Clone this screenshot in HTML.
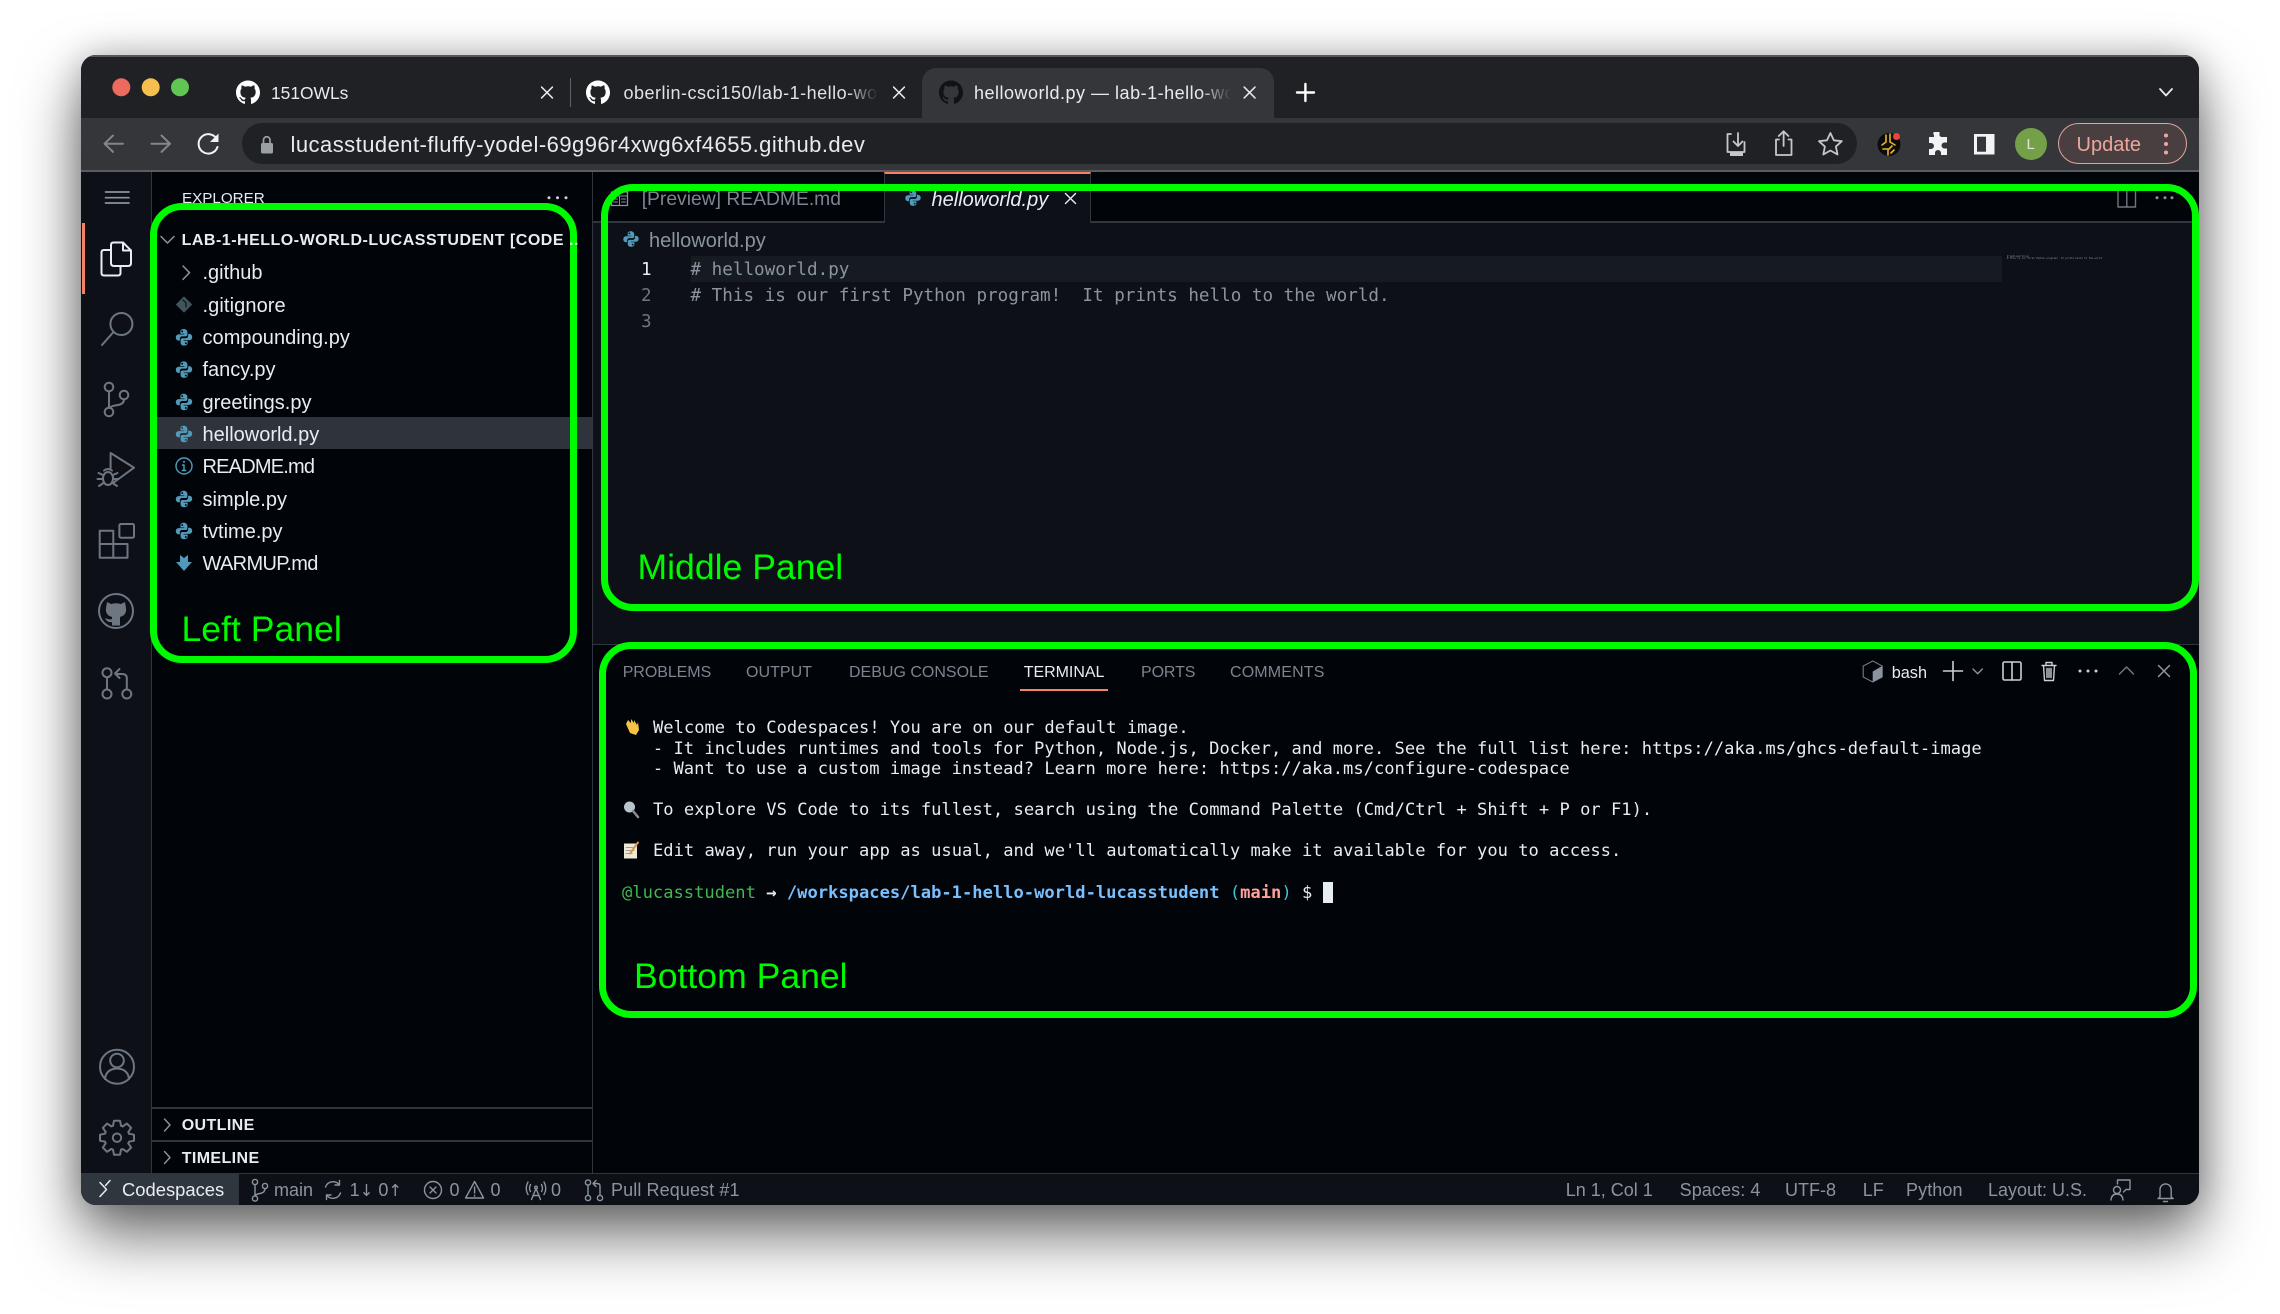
<!DOCTYPE html>
<html><head><meta charset="utf-8"><title>Codespaces</title>
<style>
html,body{margin:0;padding:0;background:#fff;width:2280px;height:1314px;overflow:hidden}
*{box-sizing:border-box}
#win{position:absolute;left:81px;top:55px;width:2118px;height:1150px;border-radius:15px;box-shadow:0 30px 62px rgba(0,0,0,.58),0 0 34px rgba(0,0,0,.22)}
#clip{position:absolute;left:81px;top:55px;width:2118px;height:1150px;border-radius:15px;overflow:hidden;background:#010409}
.r{position:absolute}
.abs{position:absolute;left:0;top:0;width:2280px;height:1314px}
.t{position:absolute;white-space:pre;line-height:30px;height:30px;font-family:"Liberation Sans",sans-serif}
.m{position:absolute;white-space:pre;font-family:"DejaVu Sans Mono","Liberation Mono",monospace;line-height:20px;height:20px}
.f{font-size:20px;color:#e6edf3;left:202.5px}
.tab{font-size:16px;color:#7d8590}
.st{font-size:18px;color:#8b949e}
.g{position:absolute;border:7.5px solid #00fa00;border-radius:32px}
.gl{position:absolute;font:35.6px/40px "Liberation Sans",sans-serif;color:#00fa00;white-space:pre}
.ed{font-size:17.6px;color:#8b949e}
.tm{font-size:17.11px;color:#e6edf3}
</style></head><body>
<div id="win"></div>
<div id="clip"></div>
<div class="abs" style="clip-path:inset(55px 81px 109px 81px round 15px)">
<!-- title / toolbar -->
<div class="r" style="left:81px;top:55px;width:2118px;height:63px;background:#202124"></div>
<div class="r" style="left:81px;top:55px;width:2118px;height:2px;background:#55575b"></div>
<div class="r" style="left:921.5px;top:68px;width:352px;height:50px;background:#35363a;border-radius:14px 14px 0 0"></div>
<div class="r" style="left:81px;top:118px;width:2118px;height:52px;background:#35363a"></div>
<div class="r" style="left:81px;top:170px;width:2118px;height:2px;background:#5a5b5f"></div>
<div class="r" style="left:242px;top:123px;width:1615px;height:41px;border-radius:21px;background:#202124"></div>
<div class="r" style="left:570px;top:78px;width:1px;height:29px;background:#5f6368"></div>
<div class="r" style="left:2058px;top:123px;width:129px;height:41px;border-radius:21px;background:#4a3f40;border:1.5px solid #e0a49c"></div>
<!-- activity bar, panels -->
<div class="r" style="left:81px;top:172px;width:71px;height:1001px;background:#0d1117"></div>
<div class="r" style="left:151px;top:172px;width:1px;height:1001px;background:#30363d"></div>
<div class="r" style="left:82px;top:223px;width:2.5px;height:71px;background:#f78166"></div>
<div class="r" style="left:152px;top:172px;width:440px;height:1001px;background:#010409"></div>
<div class="r" style="left:592px;top:172px;width:1px;height:1001px;background:#30363d"></div>
<div class="r" style="left:152px;top:417px;width:440px;height:32px;background:#2f333b"></div>
<div class="r" style="left:152px;top:1107px;width:440px;height:1.5px;background:#30363d"></div>
<div class="r" style="left:152px;top:1140px;width:440px;height:1.5px;background:#30363d"></div>
<!-- editor -->
<div class="r" style="left:593px;top:172px;width:1606px;height:50px;background:#010409"></div>
<div class="r" style="left:593px;top:222px;width:1606px;height:422px;background:#0d1117"></div>
<div class="r" style="left:593px;top:221px;width:1606px;height:1.5px;background:#30363d"></div>
<div class="r" style="left:884px;top:172px;width:207px;height:51px;background:#0d1117;border-left:1px solid #30363d;border-right:1px solid #30363d;border-top:2px solid #f78166"></div>
<div class="r" style="left:690.5px;top:256px;width:1311px;height:26px;background:#161b22"></div>
<div class="r" style="left:593px;top:644px;width:1606px;height:1.5px;background:#30363d"></div>
<div class="r" style="left:593px;top:645px;width:1606px;height:528px;background:#010409"></div>
<div class="r" style="left:1020px;top:689px;width:88px;height:2px;background:#f78166"></div>
<!-- status -->
<div class="r" style="left:81px;top:1173px;width:2118px;height:32px;background:#0d1117;border-top:1.5px solid #30363d"></div>
<div class="r" style="left:81px;top:1174px;width:158px;height:31px;background:#30363d"></div>
<div class="r" style="left:1323px;top:882px;width:10px;height:21px;background:#e6edf3"></div>

<!-- chrome text -->
<div class="t" style="left:271px;top:78px;font-size:17.4px;color:#e8eaed">151OWLs</div>
<div class="t" style="left:623.5px;top:78px;width:254px;overflow:hidden;font-size:18px;letter-spacing:.5px;color:#dfe1e5;-webkit-mask-image:linear-gradient(90deg,#000 88%,transparent)">oberlin-csci150/lab-1-hello-world-lucasstudent</div>
<div class="t" style="left:974px;top:78px;width:257px;overflow:hidden;font-size:18px;letter-spacing:.5px;color:#e8eaed;-webkit-mask-image:linear-gradient(90deg,#000 88%,transparent)">helloworld.py — lab-1-hello-world-lucasstudent</div>
<div class="t" style="left:290.5px;top:129.7px;font-size:22px;letter-spacing:.46px;color:#e8eaed">lucasstudent-fluffy-yodel-69g96r4xwg6xf4655.github.dev</div>
<div class="t" style="left:2076.5px;top:129.7px;font-size:20px;color:#eda69e">Update</div>

<!-- sidebar text -->
<div class="t" style="left:182px;top:183.5px;font-size:15.2px;color:#e6edf3">EXPLORER</div>
<div class="t" style="left:181.6px;top:226px;font-size:16px;font-weight:bold;letter-spacing:.5px;color:#e6edf3">LAB-1-HELLO-WORLD-LUCASSTUDENT [CODE</div>
<div class="t f" style="top:258.4px">.github</div>
<div class="t f" style="top:290.7px;letter-spacing:.1px">.gitignore</div>
<div class="t f" style="top:323px;letter-spacing:.05px">compounding.py</div>
<div class="t f" style="top:355.3px">fancy.py</div>
<div class="t f" style="top:387.7px">greetings.py</div>
<div class="t f" style="top:419.7px">helloworld.py</div>
<div class="t f" style="top:452.2px;letter-spacing:-.8px">README.md</div>
<div class="t f" style="top:484.7px">simple.py</div>
<div class="t f" style="top:516.7px">tvtime.py</div>
<div class="t f" style="top:549.3px;letter-spacing:-.65px">WARMUP.md</div>
<div class="t" style="left:181.7px;top:1111px;font-size:16px;font-weight:bold;letter-spacing:.4px;color:#e6edf3">OUTLINE</div>
<div class="t" style="left:181.7px;top:1143.5px;font-size:16px;font-weight:bold;letter-spacing:.4px;color:#e6edf3">TIMELINE</div>

<!-- editor text -->
<div class="t" style="left:641.7px;top:184.5px;font-size:19.3px;color:#7d8590">[Preview] README.md</div>
<div class="t" style="left:931.5px;top:184.5px;font-size:20px;font-style:italic;color:#e6edf3">helloworld.py</div>
<div class="t" style="left:649px;top:225.5px;font-size:20px;color:#8b949e">helloworld.py</div>
<div class="m ed" style="left:641px;top:260.3px;color:#e6edf3">1</div>
<div class="m ed" style="left:641px;top:286.3px;color:#6e7681">2</div>
<div class="m ed" style="left:641px;top:312.3px;color:#6e7681">3</div>
<div class="m ed" style="left:690.5px;top:260.3px"># helloworld.py</div>
<div class="m ed" style="left:690.5px;top:286.3px"># This is our first Python program!  It prints hello to the world.</div>
<div class="r" style="left:2007px;top:255.5px;font:2.43px/2.7px 'DejaVu Sans Mono',monospace;color:#8b949e;white-space:pre"># helloworld.py
# This is our first Python program!  It prints hello to the world.</div>

<!-- panel text -->
<div class="t tab" style="left:622.7px;top:657.5px;letter-spacing:-.05px">PROBLEMS</div>
<div class="t tab" style="left:746px;top:657.5px;letter-spacing:.05px">OUTPUT</div>
<div class="t tab" style="left:849px;top:657.5px">DEBUG CONSOLE</div>
<div class="t tab" style="left:1023.8px;top:657.5px;color:#e6edf3;letter-spacing:-.05px">TERMINAL</div>
<div class="t tab" style="left:1141px;top:657.5px;letter-spacing:-.1px">PORTS</div>
<div class="t tab" style="left:1230px;top:657.5px;letter-spacing:.15px">COMMENTS</div>
<div class="t" style="left:1891.7px;top:657.5px;font-size:16.3px;color:#e6edf3">bash</div>

<div class="m tm" style="left:653px;top:718px">Welcome to Codespaces! You are on our default image.</div>
<div class="m tm" style="left:622px;top:738.5px">   - It includes runtimes and tools for Python, Node.js, Docker, and more. See the full list here: https://aka.ms/ghcs-default-image</div>
<div class="m tm" style="left:622px;top:759.2px">   - Want to use a custom image instead? Learn more here: https://aka.ms/configure-codespace</div>
<div class="m tm" style="left:653px;top:800.2px">To explore VS Code to its fullest, search using the Command Palette (Cmd/Ctrl + Shift + P or F1).</div>
<div class="m tm" style="left:653px;top:841.2px">Edit away, run your app as usual, and we'll automatically make it available for you to access.</div>
<div class="m tm" style="left:622px;top:882.5px"><span style="color:#3fb950">@lucasstudent</span> <b>→</b> <b style="color:#79c0ff">/workspaces/lab-1-hello-world-lucasstudent</b> <span style="color:#39c5cf">(</span><b style="color:#ffa198">main</b><span style="color:#39c5cf">)</span> $</div>

<!-- status text -->
<div class="t" style="left:122px;top:1175px;font-size:18.4px;color:#e6edf3">Codespaces</div>
<div class="t st" style="left:274px;top:1175px">main</div>
<div class="t st" style="left:349.6px;top:1175px">1<span style="font:16.4px 'DejaVu Sans',sans-serif">↓</span> 0<span style="font:16.4px 'DejaVu Sans',sans-serif">↑</span></div>
<div class="t st" style="left:449.5px;top:1175px">0</div>
<div class="t st" style="left:490.5px;top:1175px">0</div>
<div class="t st" style="left:551px;top:1175px">0</div>
<div class="t st" style="left:611px;top:1175px;letter-spacing:.1px">Pull Request #1</div>
<div class="t st" style="left:1565.7px;top:1175px">Ln 1, Col 1</div>
<div class="t st" style="left:1679.6px;top:1175px;letter-spacing:.1px">Spaces: 4</div>
<div class="t st" style="left:1785px;top:1175px">UTF-8</div>
<div class="t st" style="left:1862.7px;top:1175px">LF</div>
<div class="t st" style="left:1906px;top:1175px;letter-spacing:.1px">Python</div>
<div class="t st" style="left:1988px;top:1175px">Layout: U.S.</div>

<!-- icons -->
<svg class="abs" width="2280" height="1314" viewBox="0 0 2280 1314" fill="none" stroke-linecap="round" stroke-linejoin="round">
<defs>
<symbol id="gh" viewBox="0 0 16 16" overflow="visible"><path fill="currentColor" stroke="none" d="M8 0C3.58 0 0 3.58 0 8c0 3.54 2.29 6.53 5.47 7.59.4.07.55-.17.55-.38 0-.19-.01-.82-.01-1.49-2.01.37-2.53-.49-2.69-.94-.09-.23-.48-.94-.82-1.13-.28-.15-.68-.52-.01-.53.63-.01 1.08.58 1.23.82.72 1.21 1.87.87 2.33.66.07-.52.28-.87.51-1.07-1.78-.2-3.64-.89-3.64-3.95 0-.87.31-1.59.82-2.15-.08-.2-.36-1.02.08-2.12 0 0 .67-.21 2.2.82.64-.18 1.32-.27 2-.27.68 0 1.36.09 2 .27 1.53-1.04 2.2-.82 2.2-.82.44 1.1.16 1.92.08 2.12.51.56.82 1.27.82 2.15 0 3.07-1.87 3.75-3.65 3.95.29.25.54.73.54 1.48 0 1.07-.01 1.93-.01 2.2 0 .21.15.46.55.38A8.013 8.013 0 0016 8c0-4.42-3.58-8-8-8z"/></symbol>
<symbol id="py" viewBox="0 0 16 16" overflow="visible"><g fill="#519aba" stroke="none"><path fill-rule="evenodd" d="M8 .2C5.300.2 4.600 1.400 4.600 2.900v1.800h3.700v.6H3C1.500 5.300.3 6.500.3 8.100c0 1.800 1.100 3 2.500 3h1.300V9.300c0-1.200.9-2.200 2.100-2.200h3.300c1 0 1.700-.7 1.700-1.700V2.900C10.900 1.400 9.800.2 8 .2zM6.300 1.500a.9.9 0 110 1.800.9.9 0 010-1.800z"/><path fill-rule="evenodd" d="M8 15.800c2.700 0 3.400-1.200 3.400-2.700v-1.800H7.700v-.6H13c1.500 0 2.700-1.200 2.700-2.800 0-1.800-1.100-3-2.500-3h-1.300v1.800c0 1.200-.9 2.200-2.100 2.200H6.500c-1 0-1.700.7-1.700 1.700v2.500c0 1.500 1.100 2.700 3.200 2.700zm1.700-1.300a.9.9 0 110-1.800.9.9 0 010 1.800z"/></g></symbol>
<symbol id="x" viewBox="-8 -8 16 16" overflow="visible"><path d="M-6.200 -6.200L6.200 6.200M6.200 -6.200L-6.200 6.200" stroke="currentColor" stroke-width="1.700"/></symbol>
</defs>

<!-- traffic lights -->
<circle cx="121.300" cy="87.300" r="9" fill="#ed6a5e"/><circle cx="150.700" cy="87.300" r="9" fill="#f4bf4f"/><circle cx="180" cy="87.300" r="9" fill="#61c554"/>
<!-- tab icons -->
<use href="#gh" x="236" y="80.500" width="24" height="24" color="#fff"/>
<use href="#gh" x="586" y="80.500" width="24" height="24" color="#fff"/>
<use href="#gh" x="939" y="80.500" width="24" height="24" color="#111214"/>
<use href="#x" x="540" y="85.500" width="14" height="14" color="#e8eaed"/>
<use href="#x" x="892" y="85.500" width="14" height="14" color="#e8eaed"/>
<use href="#x" x="1242.600" y="85.500" width="14" height="14" color="#e8eaed"/>
<path d="M1305.400 84v17M1297 92.500h17" stroke="#fff" stroke-width="2.400"/>
<path d="M2160 89l6 6.500 6-6.500" stroke="#e8eaed" stroke-width="1.800"/>
<!-- toolbar -->
<path d="M123 143.700H105.500M113 135.500l-8.500 8.200 8.500 8.200" stroke="#84868a" stroke-width="2"/>
<path d="M151.500 143.700H169M161.500 135.500l8.500 8.200-8.500 8.200" stroke="#84868a" stroke-width="2"/>
<path d="M216.700 139a9.700 9.700 0 10.800 8" stroke="#f1f3f4" stroke-width="2"/><path d="M218.500 133.500v8.500h-8.500z" fill="#f1f3f4" stroke="none"/>
<rect x="261" y="143" width="12" height="10.500" rx="1.500" fill="#9aa0a6"/><path d="M263.500 143v-3a3.200 3.200 0 016.500 0v3" stroke="#9aa0a6" stroke-width="1.700"/>
<!-- install -->
<path d="M1731 134h-3.500v18h17v-10M1738 133v13M1733.500 141.500l4.500 4.500 4.500-4.500" stroke="#c4c7cb" stroke-width="1.800"/><rect x="1730" y="152" width="13" height="4" fill="#c4c7cb"/>
<!-- share -->
<path d="M1783.600 146v-14M1778.800 136l4.800-4.800 4.800 4.800M1779 139.500h-3v15.500h15.500v-15.500h-3" stroke="#c4c7cb" stroke-width="1.800"/>
<!-- star -->
<path d="M1830.400 133l3.400 7.300 8 .9-5.900 5.400 1.600 7.900-7.100-4-7.100 4 1.600-7.900-5.900-5.400 8-.9z" stroke="#c4c7cb" stroke-width="1.800"/>
<!-- ext round -->
<circle cx="1889" cy="144.500" r="11.500" fill="#0c0c0c"/>
<path d="M1886 135v7l-4 3M1890 134v8l5 3M1883 149h6l3-3M1888 155v-5M1894 150l-3 3" stroke="#e5b62f" stroke-width="1.600"/>
<circle cx="1896.500" cy="136.500" r="3.500" fill="#e8453c"/>
<!-- puzzle -->
<path d="M1934 132h5.500v3.500a2.500 2.500 0 002 1.500h5.500v5.500h-2.500a3 3 0 000 6h2.500v6.500h-6v-2a3 3 0 00-6 0v2h-6v-6h2a3 3 0 000-6h-2v-6h5v-2a2 2 0 010-3z" fill="#f1f3f4" stroke="none"/>
<!-- side panel -->
<rect x="1974" y="134" width="20.500" height="20.500" fill="#f1f3f4"/><rect x="1977" y="136.700" width="9" height="15" fill="#35363a"/>
<!-- avatar -->
<circle cx="2031" cy="144" r="16" fill="#74a04a"/>
<!-- update dots -->
<circle cx="2166" cy="135.500" r="2" fill="#eda69e"/><circle cx="2166" cy="144" r="2" fill="#eda69e"/><circle cx="2166" cy="152.500" r="2" fill="#eda69e"/>

<!-- activity bar -->
<path d="M105.500 192h23.500M105.500 197.700h23.500M105.500 203h23.500" stroke="#8b949e" stroke-width="1.700"/>
<g stroke="#e6edf3" stroke-width="2">
<path d="M111 245Q111 242.500 113.500 242.500H123L131 250.500V263Q131 266 128 266H114Q111 266 111 263Z"/><path d="M123 242.500V250.500H131"/>
<path d="M111 250H104Q101.500 250 101.500 252.500V273Q101.500 275.500 104 275.500H118Q120.500 275.500 120.500 273V266"/>
</g>
<g stroke="#6e7681" stroke-width="2">
<circle cx="121.400" cy="324" r="11"/><path d="M113.500 332L102 345"/>
<circle cx="109" cy="387" r="4.300"/><circle cx="109" cy="412" r="4.300"/><circle cx="124" cy="395" r="4.300"/><path d="M109 391.300V407.700M124 399.300Q124 404 118 405Q110.500 406 109.800 408"/>
<path d="M110.600 468V453L134 467.700L113 483"/>
<ellipse cx="108" cy="478.500" rx="5" ry="6.500"/><path d="M104 470.500q4-3 8 0M103 475l-4.500-2M113 475l4.500-2M103 479h-5.500M113 479h5.500M103.500 483l-4.500 3M112.500 483l4.500 3"/>
<path d="M99.700 544V530.700H113.300V557.700H99.700V544H127.500V557.700H113.300"/><rect x="119.400" y="524" width="14.600" height="13.700" rx="1.500"/>
<circle cx="116" cy="611" r="17"/>
<circle cx="107" cy="672.700" r="4.500"/><circle cx="107" cy="694" r="4.500"/><circle cx="126.800" cy="694" r="4.500"/><path d="M107 677.200V689.500M126.800 689.500V678Q126.800 674 122 674H116M119.500 669L115 673.500L119.500 678"/>
<circle cx="117" cy="1066.700" r="17"/><circle cx="117" cy="1060.500" r="6.800"/><path d="M105 1079Q106 1069 117 1068.500Q128 1069 129 1079"/>
</g>
<path transform="translate(116 611)" fill="#6e7681" d="M-9 -9L-5 -7Q0 -8.500 5 -7L9 -9L10 -3Q11 4 4 6L4 14.500L-4 14.500L-4 11Q-9 12 -11 7Q-7 9 -4 8L-4 6Q-11 4 -10 -3Z"/>
<g transform="translate(117 1137.700)" stroke="#6e7681" stroke-width="2">
<circle r="4.200"/>
<path d="M-4 -12L-3 -17H3L4 -12L5.660 -11.300"/>
<path transform="rotate(45)" d="M-4 -12L-3 -17H3L4 -12L5.660 -11.300"/>
<path transform="rotate(90)" d="M-4 -12L-3 -17H3L4 -12L5.660 -11.300"/>
<path transform="rotate(135)" d="M-4 -12L-3 -17H3L4 -12L5.660 -11.300"/>
<path transform="rotate(180)" d="M-4 -12L-3 -17H3L4 -12L5.660 -11.300"/>
<path transform="rotate(225)" d="M-4 -12L-3 -17H3L4 -12L5.660 -11.300"/>
<path transform="rotate(270)" d="M-4 -12L-3 -17H3L4 -12L5.660 -11.300"/>
<path transform="rotate(315)" d="M-4 -12L-3 -17H3L4 -12L5.660 -11.300"/>
</g>

<!-- sidebar icons -->
<circle cx="549" cy="197.700" r="1.500" fill="#c9d1d9"/><circle cx="557.500" cy="197.700" r="1.500" fill="#c9d1d9"/><circle cx="566" cy="197.700" r="1.500" fill="#c9d1d9"/>
<path d="M161 236.500l6.500 6.500 6.500-6.500" stroke="#8b949e" stroke-width="1.500"/>
<path d="M183 266l6.500 6.700-6.500 6.700" stroke="#8b949e" stroke-width="1.500"/>
<path d="M176.500 304.500l7.500-7.500 7.500 7.500-7.500 7.500z" fill="#41535b" stroke="#41535b" stroke-width="1"/><path d="M183 300l3 3v4" stroke="#0d1117" stroke-width="1.200"/>
<use href="#py" x="175.500" y="328.800" width="17" height="17"/>
<use href="#py" x="175.500" y="361.100" width="17" height="17"/>
<use href="#py" x="175.500" y="393.500" width="17" height="17"/>
<use href="#py" x="175.500" y="425.500" width="17" height="17"/>
<circle cx="184" cy="466" r="8" stroke="#519aba" stroke-width="1.400"/><path d="M184 465v5.500M182.300 470.500h3.400M182.500 465h1.500" stroke="#519aba" stroke-width="1.500"/><circle cx="184" cy="461.800" r="1.100" fill="#519aba"/>
<use href="#py" x="175.500" y="490.500" width="17" height="17"/>
<use href="#py" x="175.500" y="522.500" width="17" height="17"/>
<path d="M180 555l4 3 4-3 0 7h4l-8 9-8-9h4z" fill="#519aba" stroke="none"/>
<path d="M164.500 1119l5.500 6-5.500 6M164.500 1151.500l5.500 6-5.500 6" stroke="#8b949e" stroke-width="1.400"/>

<!-- editor icons -->
<rect x="611.500" y="192" width="16" height="13.500" stroke="#8b949e" stroke-width="1.300"/><path d="M611.500 196h16M619.500 196v9.500M613.500 199h4M613.500 202h4M621.500 199h4M621.500 202h4" stroke="#8b949e" stroke-width="1"/>
<use href="#py" x="905" y="190" width="16" height="16"/>
<use href="#x" x="1064" y="192" width="13" height="13" color="#e6edf3"/>
<use href="#py" x="623" y="231" width="16" height="16"/>
<path d="M2118 190h17.500v17h-17.500zM2126.800 190v17" stroke="#6e7681" stroke-width="1.400"/>
<circle cx="2157" cy="197.700" r="1.500" fill="#8b949e"/><circle cx="2165" cy="197.700" r="1.500" fill="#8b949e"/><circle cx="2172" cy="197.700" r="1.500" fill="#8b949e"/>

<!-- panel action icons -->
<path d="M1872.700 661l9.500 5v11l-9.500 5-9.500-5v-11z" stroke="#6e7681" stroke-width="1.200"/><path d="M1872.700 671.500l9.500-5.500v11l-9.500 5z" fill="#8b949e" stroke="none"/>
<path d="M1953 661.500v19M1943.500 671h19" stroke="#c9d1d9" stroke-width="1.600"/>
<path d="M1973 669l4.700 4.700 4.700-4.700" stroke="#8b949e" stroke-width="1.400"/>
<rect x="2003" y="662" width="18" height="18" rx="1.500" stroke="#c9d1d9" stroke-width="1.600"/><path d="M2012 662v18" stroke="#c9d1d9" stroke-width="1.600"/>
<path d="M2042 665.500h14M2046 665v-2.500h6v2.500M2043.500 665.500l1 15h9l1-15M2047 668.500v9M2049 668.500v9M2051 668.500v9" stroke="#c9d1d9" stroke-width="1.400"/>
<circle cx="2080" cy="671" r="1.500" fill="#c9d1d9"/><circle cx="2088" cy="671" r="1.500" fill="#c9d1d9"/><circle cx="2096" cy="671" r="1.500" fill="#c9d1d9"/>
<path d="M2119.500 674l7-7 7 7" stroke="#6e7681" stroke-width="1.500"/>
<use href="#x" x="2157" y="664" width="14" height="14" color="#8b949e"/>

<!-- terminal emoji -->
<g transform="translate(632 727)"><path d="M-6 -3l4 9 6 2 3-5-1-8-1 3-3-5 0 3-3-4 0 4-3-3z" fill="#f6c244" stroke="none"/></g>
<g transform="translate(631 809)"><circle cx="-1.500" cy="-2" r="5.500" fill="#b8c4cc"/><path d="M2 2l5 6" stroke="#8a8f94" stroke-width="2.500"/></g>
<g transform="translate(631 850.500)"><rect x="-7" y="-7" width="13" height="15" fill="#eee9d7"/><path d="M-5 -3h8M-5 0h8M-5 3h6" stroke="#9d9d9d" stroke-width="1"/><path d="M7 -8L-1 3" stroke="#d99a3e" stroke-width="2"/></g>

<!-- status icons -->
<path d="M100 1182.500l6.500 7-6.500 7M110 1180.500l-4.500 5" stroke="#e6edf3" stroke-width="1.500"/>
<g stroke="#8b949e" stroke-width="1.400">
<circle cx="255" cy="1182" r="2.600"/><circle cx="255" cy="1198.500" r="2.600"/><circle cx="265" cy="1186" r="2.600"/><path d="M255 1184.600V1196M265 1188.600q0 4-5 4.900-4.500.8-5 2.500"/>
<path d="M325.500 1187a8 8 0 0114-2M340.500 1193a8 8 0 01-14 2M339.500 1180.500v4.500h-4.500M326.500 1199.500V1195h4.500"/>
<circle cx="433" cy="1190" r="8.500"/><path d="M430 1187l6 6M436 1187l-6 6"/>
<path d="M474.600 1181.500l9 16.500h-18zM474.600 1187v6M474.600 1195.500v.5"/>
<path d="M536 1188.500l-4.500 11M536 1188.500l4.500 11M533 1195.500h6M530.500 1184.500q-2 4 0 7M541.500 1184.500q2 4 0 7M528 1182q-3.500 6.500 0 12.500M544 1182q3.500 6.500 0 12.500"/><circle cx="536" cy="1187.500" r="1.300"/>
<circle cx="588" cy="1182.500" r="2.600"/><circle cx="588" cy="1198" r="2.600"/><circle cx="600" cy="1198" r="2.600"/><path d="M588 1185.100V1195.400M600 1195.400V1186q0-2.500-3-2.500h-3M596 1180.500l-3 3 3 3"/>
<path d="M2117.500 1184v-4h12.500v9.500h-4l-2.500 2.500"/><circle cx="2117" cy="1190" r="3.500"/><path d="M2111 1200q.5-6 6-6 5.500 0 6 6"/>
<path d="M2160 1197v-7.500a5.600 5.600 0 0111.200 0v7.500l2 1.500h-15.200zM2163.500 1201.500h4"/>
</g>
</svg>

<div class="t" style="left:2026.500px;top:129.500px;font-size:15px;color:#dfe8d5">L</div>

<!-- green annotations -->
<div class="g" style="left:149.500px;top:203px;width:427.500px;height:460px"></div>
<div class="gl" style="left:181.500px;top:608.700px">Left Panel</div>
<div class="g" style="left:600.500px;top:183.500px;width:1598px;height:427.500px"></div>
<div class="gl" style="left:637.500px;top:546.500px">Middle Panel</div>
<div class="g" style="left:599px;top:641.500px;width:1598px;height:376px"></div>
<div class="gl" style="left:634px;top:956px">Bottom Panel</div>
<div class="t" style="left:569px;top:226px;font-size:16px;font-weight:bold;letter-spacing:.5px;color:#e6edf3">..</div>
</div>
</body></html>
